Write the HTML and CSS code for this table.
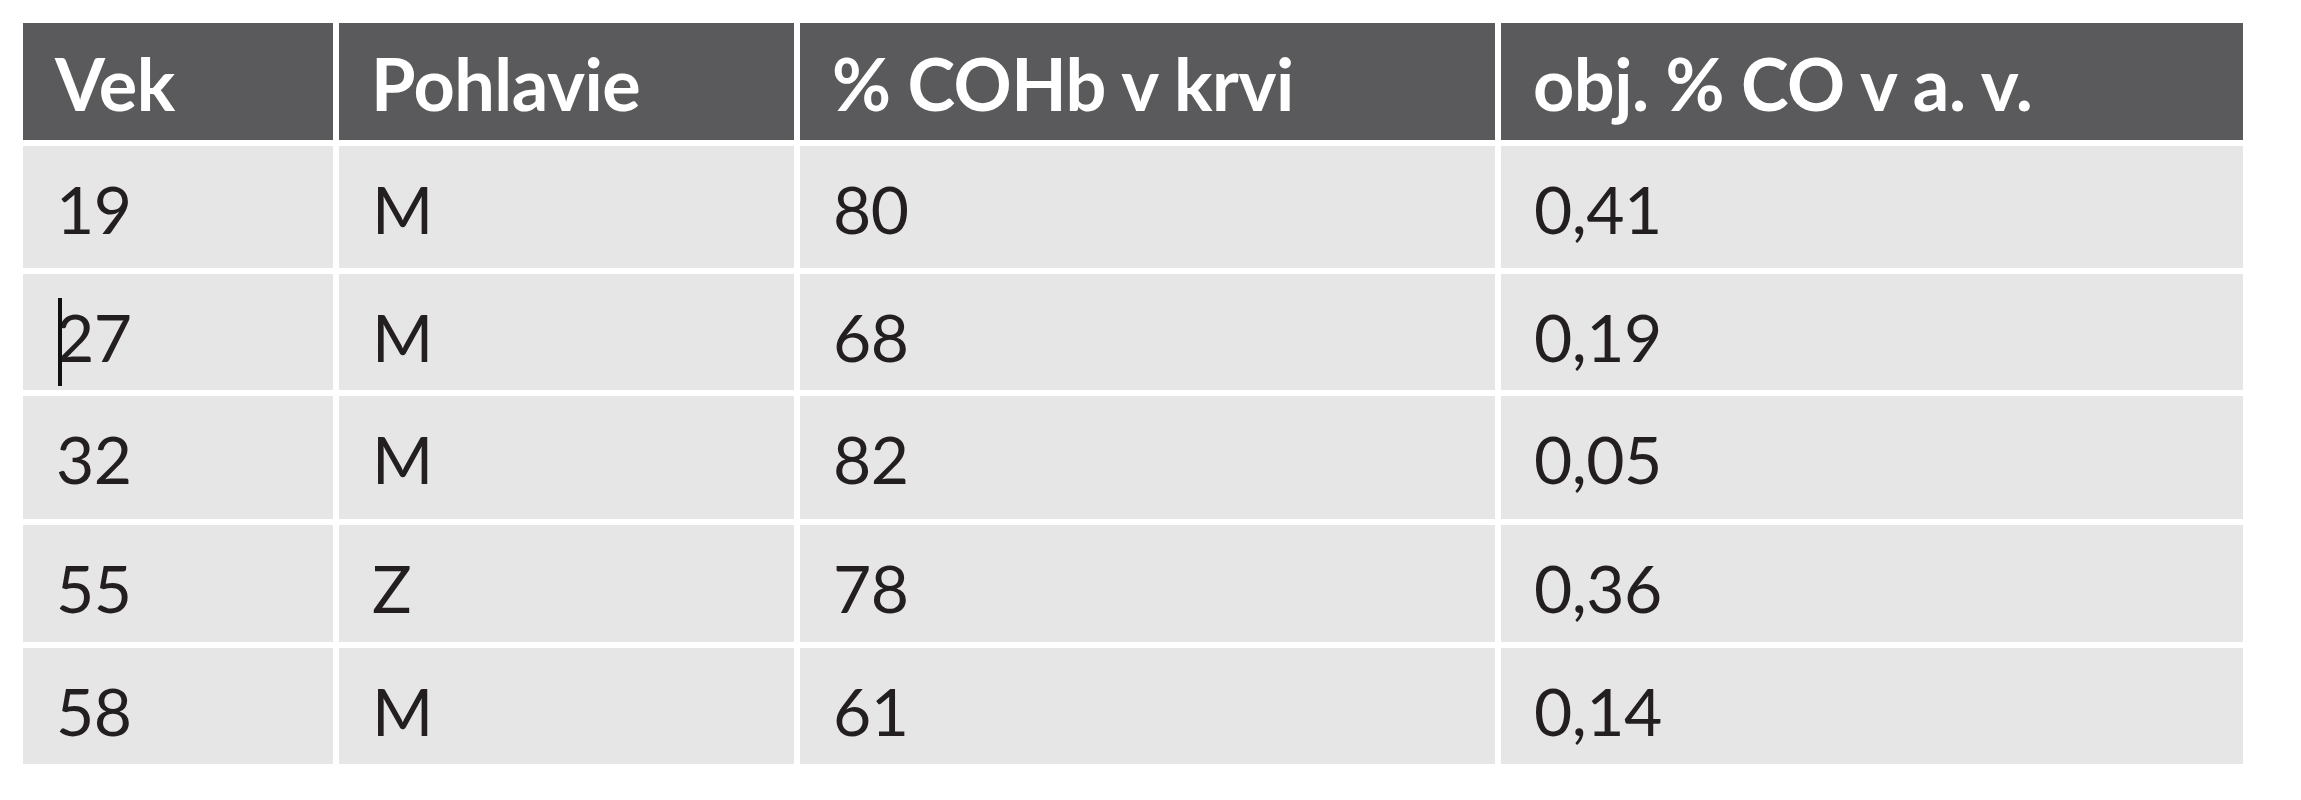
FILE: index.html
```html
<!DOCTYPE html>
<html lang="sk">
<head>
<meta charset="utf-8">
<title>Tabuľka COHb</title>
<link rel="stylesheet" href="styles.css">
</head>
<body>
<div class="sheet" role="table">
  <div class="cell head" role="columnheader">Vek</div>
  <div class="cell head" role="columnheader">Pohlavie</div>
  <div class="cell head" role="columnheader">% COHb v krvi</div>
  <div class="cell head" role="columnheader">obj. % CO v a. v.</div>

  <div class="cell" role="cell">19</div>
  <div class="cell" role="cell">M</div>
  <div class="cell" role="cell">80</div>
  <div class="cell" role="cell">0,41</div>

  <div class="cell has-caret" role="cell"><span class="caret"></span>27</div>
  <div class="cell" role="cell">M</div>
  <div class="cell" role="cell">68</div>
  <div class="cell" role="cell">0,19</div>

  <div class="cell" role="cell">32</div>
  <div class="cell" role="cell">M</div>
  <div class="cell" role="cell">82</div>
  <div class="cell" role="cell">0,05</div>

  <div class="cell" role="cell">55</div>
  <div class="cell" role="cell">Z</div>
  <div class="cell" role="cell">78</div>
  <div class="cell" role="cell">0,36</div>

  <div class="cell" role="cell">58</div>
  <div class="cell" role="cell">M</div>
  <div class="cell" role="cell">61</div>
  <div class="cell" role="cell">0,14</div>
</div>
</body>
</html>
```

FILE: styles.css
```css
html, body {
  margin: 0;
  padding: 0;
  background: #ffffff;
}

body {
  padding: 23px 0 0 23px;
  font-family: Lato, "Open Sans", "Noto Sans", sans-serif;
}

.sheet {
  display: grid;
  grid-template-columns: 310px 455px 695px 742px;
  grid-template-rows: 117px 122px 116px 123px 117px 116px;
  gap: 6px;
  width: 2226px;
}

.cell {
  background: #e6e6e6;
  color: #231f20;
  font-size: 66px;
  font-weight: 400;
  line-height: 1;
  letter-spacing: -0.5px;
  padding: 30px 0 0 33px;
  box-sizing: border-box;
  white-space: nowrap;
}

.head {
  background: #5a5a5c;
  color: #ffffff;
  font-size: 72px;
  font-weight: 700;
  letter-spacing: -0.5px;
  padding-top: 24px;
  padding-left: 32px;
}

.has-caret {
  position: relative;
}

.caret {
  position: absolute;
  left: 35px;
  top: 24px;
  width: 4px;
  height: 88px;
  background: #111111;
}
```
